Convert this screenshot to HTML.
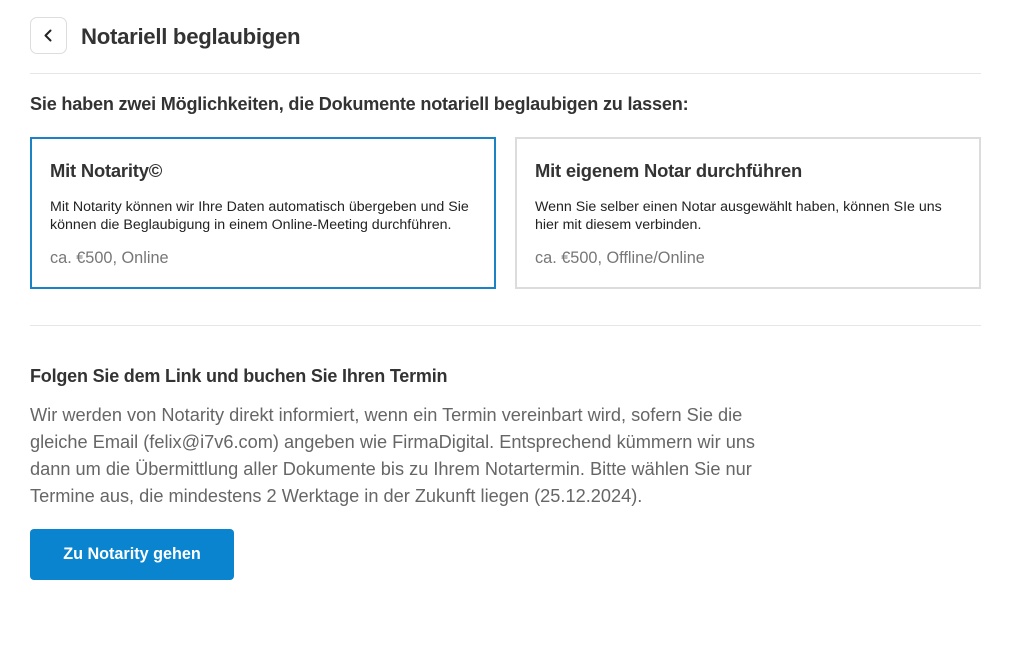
<!DOCTYPE html>
<html><head><meta charset="utf-8"><style>
*{margin:0;padding:0;box-sizing:border-box}
body{width:1024px;height:650px;background:#fff;font-family:"Liberation Sans",sans-serif;position:relative;overflow:hidden;color:#333}
.a{position:absolute;white-space:nowrap}
.back{left:30px;top:17px;width:37px;height:37px;border:1px solid #ddd;border-radius:7px}
.hr{position:absolute;left:30px;width:951px;height:1px;background:#e6e6e6}
.card{position:absolute;top:137px;width:466px;height:152px;border:2px solid #dcdcdc}
.card.sel{border-color:#1b82c6}
.ct{position:absolute;left:18px;top:21px;font-size:18.4px;font-weight:bold;color:#333;letter-spacing:-0.2px}
.cd{position:absolute;left:18px;top:59px;font-size:14.2px;line-height:18px;color:#222;white-space:nowrap}
.cp{position:absolute;left:18px;top:110px;font-size:16.3px;color:#777}
.p{left:30px;font-size:18.2px;color:#666;line-height:27px}
.btn{position:absolute;left:30px;top:529px;width:204px;height:51px;background:#0a84cf;border-radius:4px;color:#fff;font-weight:bold;font-size:16.2px;text-align:center;line-height:51px}
</style></head><body>
<div class="a back"><svg width="37" height="37" viewBox="0 0 37 37" style="position:absolute;left:-1px;top:-1px"><path d="M20.5 13.5 L15.5 18.5 L20.5 23.5" fill="none" stroke="#222" stroke-width="2" stroke-linecap="round" stroke-linejoin="round"/></svg></div>
<div class="a" style="left:81px;top:24px;font-size:22.2px;font-weight:bold;color:#333;letter-spacing:-0.3px">Notariell beglaubigen</div>
<div class="hr" style="top:73px"></div>
<div class="a" style="left:30px;top:94px;font-size:18.1px;font-weight:bold;color:#333;letter-spacing:-0.2px">Sie haben zwei Möglichkeiten, die Dokumente notariell beglaubigen zu lassen:</div>
<div class="card sel" style="left:30px"><div class="ct">Mit Notarity©</div><div class="cd">Mit Notarity können wir Ihre Daten automatisch übergeben und Sie<br>können die Beglaubigung in einem Online-Meeting durchführen.</div><div class="cp">ca. €500, Online</div></div>
<div class="card" style="left:515px"><div class="ct">Mit eigenem Notar durchführen</div><div class="cd">Wenn Sie selber einen Notar ausgewählt haben, können SIe uns<br>hier mit diesem verbinden.</div><div class="cp">ca. €500, Offline/Online</div></div>
<div class="hr" style="top:325px"></div>
<div class="a" style="left:30px;top:366px;font-size:18px;font-weight:bold;color:#333;letter-spacing:-0.2px">Folgen Sie dem Link und buchen Sie Ihren Termin</div>
<div class="a p" style="top:402px">Wir werden von Notarity direkt informiert, wenn ein Termin vereinbart wird, sofern Sie die<br>gleiche Email (felix@i7v6.com) angeben wie FirmaDigital. Entsprechend kümmern wir uns<br>dann um die Übermittlung aller Dokumente bis zu Ihrem Notartermin. Bitte wählen Sie nur<br>Termine aus, die mindestens 2 Werktage in der Zukunft liegen (25.12.2024).</div>
<div class="btn">Zu Notarity gehen</div>
</body></html>
